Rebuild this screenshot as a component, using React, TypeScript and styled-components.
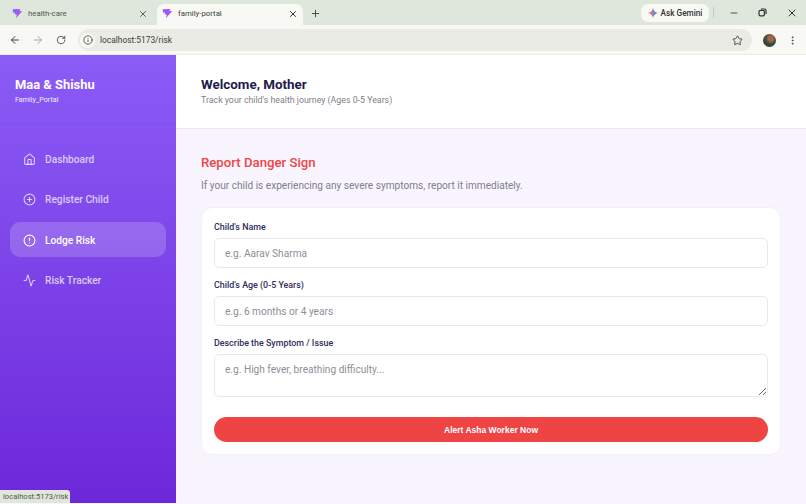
import styled, { createGlobalStyle } from "styled-components";
import { Activity, ArrowLeft, ArrowRight, CircleAlert, CirclePlus, EllipsisVertical, House, Info, Minus, Plus, RotateCw, Star, X } from "lucide-react";

const GlobalStyle = createGlobalStyle`
  * {
    box-sizing: border-box;
  }
  html, body {
    margin: 0;
    height: 100%;
    overflow: hidden;
  }
  body {
    font-family: Roboto, "Noto Sans", "Liberation Sans", sans-serif;
  }
`;

const Page = styled.div`
  position: relative;
  width: 806px;
  height: 504px;
  display: flex;
  flex-direction: column;
  background: #f9f5ff;
`;

const TabStrip = styled.div`
  height: 25px;
  display: flex;
  align-items: flex-end;
  padding-left: 7px;
  background: #dfe6dc;
  flex-shrink: 0;
`;

const Tab = styled.div<{ $active?: boolean }>`
  width: 146px;
  height: 21px;
  margin-right: 4px;
  padding: 0 5px 2px 5px;
  display: flex;
  align-items: center;
  gap: 5px;
  border-radius: 7px 7px 0 0;
  background: ${(p) => (p.$active ? "#f8f8f4" : "transparent")};
  color: ${(p) => (p.$active ? "#3b3f3a" : "#50564f")};
  font-size: 7.8px;
`;

const TabTitle = styled.span`
  flex: 1;
`;

const NewTab = styled.div`
  height: 21px;
  display: flex;
  align-items: center;
  padding: 0 0 2px 3px;
  color: #3f443e;
`;

const StripRight = styled.div`
  margin-left: auto;
  height: 25px;
  display: flex;
  align-items: center;
  color: #2f332e;
`;

const GeminiButton = styled.div`
  width: 68px;
  height: 18px;
  margin-right: 4px;
  display: flex;
  align-items: center;
  justify-content: center;
  gap: 3px;
  border-radius: 7px;
  background: #f8f9f5;
  color: #30342f;
  font-size: 8.2px;
  font-weight: 500;
`;

const StripDivider = styled.div`
  width: 1px;
  height: 11px;
  margin-right: 5px;
  background: #c4cbc1;
`;

const WindowButton = styled.div`
  width: 29px;
  display: flex;
  justify-content: center;
`;

const Toolbar = styled.div`
  height: 30px;
  display: flex;
  align-items: center;
  padding: 1px 8px 0 3px;
  background: #f8f8f4;
  border-bottom: 1px solid #ecebe8;
  flex-shrink: 0;
`;

const NavButton = styled.div<{ $muted?: boolean }>`
  width: 23px;
  display: flex;
  justify-content: center;
  color: ${(p) => (p.$muted ? "#a6aaa4" : "#41453f")};
`;

const AddressBar = styled.div`
  width: 674px;
  height: 22px;
  margin-left: 6px;
  display: flex;
  align-items: center;
  padding: 0 9px 0 2px;
  border-radius: 11px;
  background: #e9ebe4;
  color: #3a3e39;
  font-size: 8.4px;
`;

const InfoBadge = styled.span`
  width: 15px;
  height: 15px;
  margin-right: 5px;
  display: flex;
  align-items: center;
  justify-content: center;
  border-radius: 50%;
  background: #f8f8f4;
  color: #41453f;
`;

const Url = styled.span`
  flex: 1;
`;

const Avatar = styled.div`
  width: 13px;
  height: 13px;
  margin-left: 11px;
  border-radius: 50%;
  background: radial-gradient(circle at 60% 35%, #a5654a 0 22%, #3f4d3c 45%, #23302b 100%);
`;

const MoreButton = styled.div`
  margin-left: 11px;
  display: flex;
  color: #41453f;
`;

const Shell = styled.div`
  flex: 1;
  min-height: 0;
  display: flex;
  padding-bottom: 1px;
`;

const Sidebar = styled.aside`
  width: 176px;
  flex-shrink: 0;
  background: linear-gradient(180deg, #8b5cf6 0%, #6d28d9 100%);
  color: #fff;
`;

const Brand = styled.div`
  height: 73px;
  padding: 21px 15px 0;
  border-bottom: 1px solid rgba(255, 255, 255, 0.03);
`;

const BrandName = styled.div`
  font-size: 12.9px;
  font-weight: 700;
  line-height: 17px;
`;

const BrandSub = styled.div`
  font-size: 7.2px;
  line-height: 10px;
  margin-top: 2px;
  opacity: 0.9;
`;

const Nav = styled.nav`
  display: flex;
  flex-direction: column;
  gap: 5.5px;
  padding: 13px 10px 0;
`;

const NavItem = styled.div<{ $active?: boolean }>`
  height: 35px;
  display: flex;
  align-items: center;
  gap: 9px;
  padding: 1px 0 0 13px;
  border-radius: 10px;
  background: ${(p) => (p.$active ? "rgba(255, 255, 255, 0.18)" : "transparent")};
  color: ${(p) => (p.$active ? "#fff" : "rgba(255, 255, 255, 0.72)")};
  font-size: 10.2px;
  font-weight: 500;
`;

const Main = styled.main`
  flex: 1;
  display: flex;
  flex-direction: column;
`;

const Header = styled.header`
  height: 74px;
  padding: 21px 25px 0;
  background: #fff;
  border-bottom: 1px solid #ece9f1;
  flex-shrink: 0;
`;

const Welcome = styled.h1`
  margin: 0;
  color: #1e1b4b;
  font-size: 13.4px;
  font-weight: 700;
  line-height: 18px;
`;

const HeaderSub = styled.p`
  margin: 0;
  color: #7d7f8a;
  font-size: 8.8px;
  line-height: 13px;
`;

const Content = styled.div`
  padding: 24px 25px 0 25px;
`;

const Title = styled.h2`
  margin: 0;
  color: #ef4444;
  font-size: 13.2px;
  font-weight: 500;
  line-height: 20px;
`;

const Description = styled.p`
  margin: 6px 0 0;
  color: #7d7f8a;
  font-size: 10.1px;
  line-height: 14px;
`;

const Card = styled.form`
  height: 248px;
  margin-top: 14px;
  padding: 13px 12px 12px;
  display: flex;
  flex-direction: column;
  background: #fff;
  border: 1px solid #f3f0f8;
  border-radius: 11px;
`;

const Label = styled.label`
  display: block;
  margin-bottom: 4px;
  color: #312e5c;
  font-size: 8.9px;
  font-weight: 500;
  line-height: 13px;
`;

const Field = styled.div`
  margin-bottom: 11px;
`;

const Input = styled.input`
  display: block;
  width: 100%;
  height: 30px;
  padding: 0 10px;
  background: #fff;
  border: 1px solid #e9e9ed;
  border-radius: 5px;
  outline: none;
  font-family: inherit;
  font-size: 10.15px;
  &::placeholder {
    color: #8d8f96;
  }
`;

const TextArea = styled.textarea`
  display: block;
  width: 100%;
  height: 43px;
  padding: 8px 10px;
  background: #fff;
  border: 1px solid #e9e9ed;
  border-radius: 5px;
  outline: none;
  font-family: inherit;
  font-size: 10.15px;
  line-height: 14px;
  &::placeholder {
    color: #8d8f96;
  }
`;

const SubmitButton = styled.button`
  height: 25px;
  margin-top: 9px;
  border: none;
  border-radius: 13px;
  background: #ef4444;
  color: #fff;
  font-family: "Liberation Sans", Arial, sans-serif;
  font-size: 8.5px;
  font-weight: 700;
`;

const StatusBubble = styled.div`
  position: absolute;
  left: 0;
  bottom: 1px;
  width: 70px;
  height: 13px;
  padding: 0 0 0 3px;
  display: flex;
  align-items: center;
  border-radius: 0 3px 0 0;
  background: #e0e6dc;
  color: #50564f;
  font-size: 7.6px;
  white-space: nowrap;
`;

const Favicon = () => (
  <svg width="11" height="11" viewBox="0 0 14 13">
    <path d="M1 1h8.5L8.3 3.6H12.6L5 12.6l1.4-5H3.2L4 5.2H1.2z" fill="#8b5cf6" />
    <path d="M4.5 1H11L9 3.6h3.6L8 8.2H5.4z" fill="#a855f7" />
  </svg>
);

const GeminiStar = () => (
  <svg width="10" height="10" viewBox="0 0 10 10">
    <path d="M5 0c.4 2.6 2 4.4 5 5-2.6.5-4.5 2.2-5 5z" fill="#4f8ff0" />
    <path d="M5 0C4.6 2.6 3 4.4 0 5c2.6.5 4.5 2.2 5 5z" fill="#e8716a" />
  </svg>
);

const RestoreIcon = () => (
  <svg width="9" height="9" viewBox="0 0 9 9" fill="none" stroke="currentColor" strokeWidth="1.2">
    <rect x="1" y="2.4" width="5.4" height="5.4" rx="1.4" />
    <path d="M3 1h3.6A1.4 1.4 0 0 1 8 2.4V6" />
  </svg>
);

const navItems = [
  { label: "Dashboard", icon: House },
  { label: "Register Child", icon: CirclePlus },
  { label: "Lodge Risk", icon: CircleAlert, active: true },
  { label: "Risk Tracker", icon: Activity },
];

export default function App() {
  return (
    <Page>
      <GlobalStyle />
      <TabStrip>
        <Tab>
          <Favicon />
          <TabTitle>health-care</TabTitle>
          <X size={10} color="#444" />
        </Tab>
        <Tab $active>
          <Favicon />
          <TabTitle>family-portal</TabTitle>
          <X size={10} strokeWidth={2.4} color="#333" />
        </Tab>
        <NewTab>
          <Plus size={11} />
        </NewTab>
        <StripRight>
          <GeminiButton>
            <GeminiStar />
            Ask Gemini
          </GeminiButton>
          <StripDivider />
          <WindowButton>
            <Minus size={10} />
          </WindowButton>
          <WindowButton>
            <RestoreIcon />
          </WindowButton>
          <WindowButton>
            <X size={12} />
          </WindowButton>
        </StripRight>
      </TabStrip>
      <Toolbar>
        <NavButton>
          <ArrowLeft size={12} />
        </NavButton>
        <NavButton $muted>
          <ArrowRight size={12} />
        </NavButton>
        <NavButton>
          <RotateCw size={10} />
        </NavButton>
        <AddressBar>
          <InfoBadge>
            <Info size={10} />
          </InfoBadge>
          <Url>localhost:5173/risk</Url>
          <Star size={11} color="#41453f" />
        </AddressBar>
        <Avatar />
        <MoreButton>
          <EllipsisVertical size={11} />
        </MoreButton>
      </Toolbar>
      <Shell>
        <Sidebar>
          <Brand>
            <BrandName>Maa &amp; Shishu</BrandName>
            <BrandSub>Family_Portal</BrandSub>
          </Brand>
          <Nav>
            {navItems.map((item) => (
              <NavItem key={item.label} $active={item.active}>
                <item.icon size={13} />
                {item.label}
              </NavItem>
            ))}
          </Nav>
        </Sidebar>
        <Main>
          <Header>
            <Welcome>Welcome, Mother</Welcome>
            <HeaderSub>Track your child's health journey (Ages 0-5 Years)</HeaderSub>
          </Header>
          <Content>
            <Title>Report Danger Sign</Title>
            <Description>If your child is experiencing any severe symptoms, report it immediately.</Description>
            <Card>
              <Field>
                <Label>Child's Name</Label>
                <Input placeholder="e.g. Aarav Sharma" />
              </Field>
              <Field>
                <Label>Child's Age (0-5 Years)</Label>
                <Input placeholder="e.g. 6 months or 4 years" />
              </Field>
              <Field>
                <Label>Describe the Symptom / Issue</Label>
                <TextArea placeholder="e.g. High fever, breathing difficulty..." />
              </Field>
              <SubmitButton type="button">Alert Asha Worker Now</SubmitButton>
            </Card>
          </Content>
        </Main>
      </Shell>
      <StatusBubble>localhost:5173/risk</StatusBubble>
    </Page>
  );
}
